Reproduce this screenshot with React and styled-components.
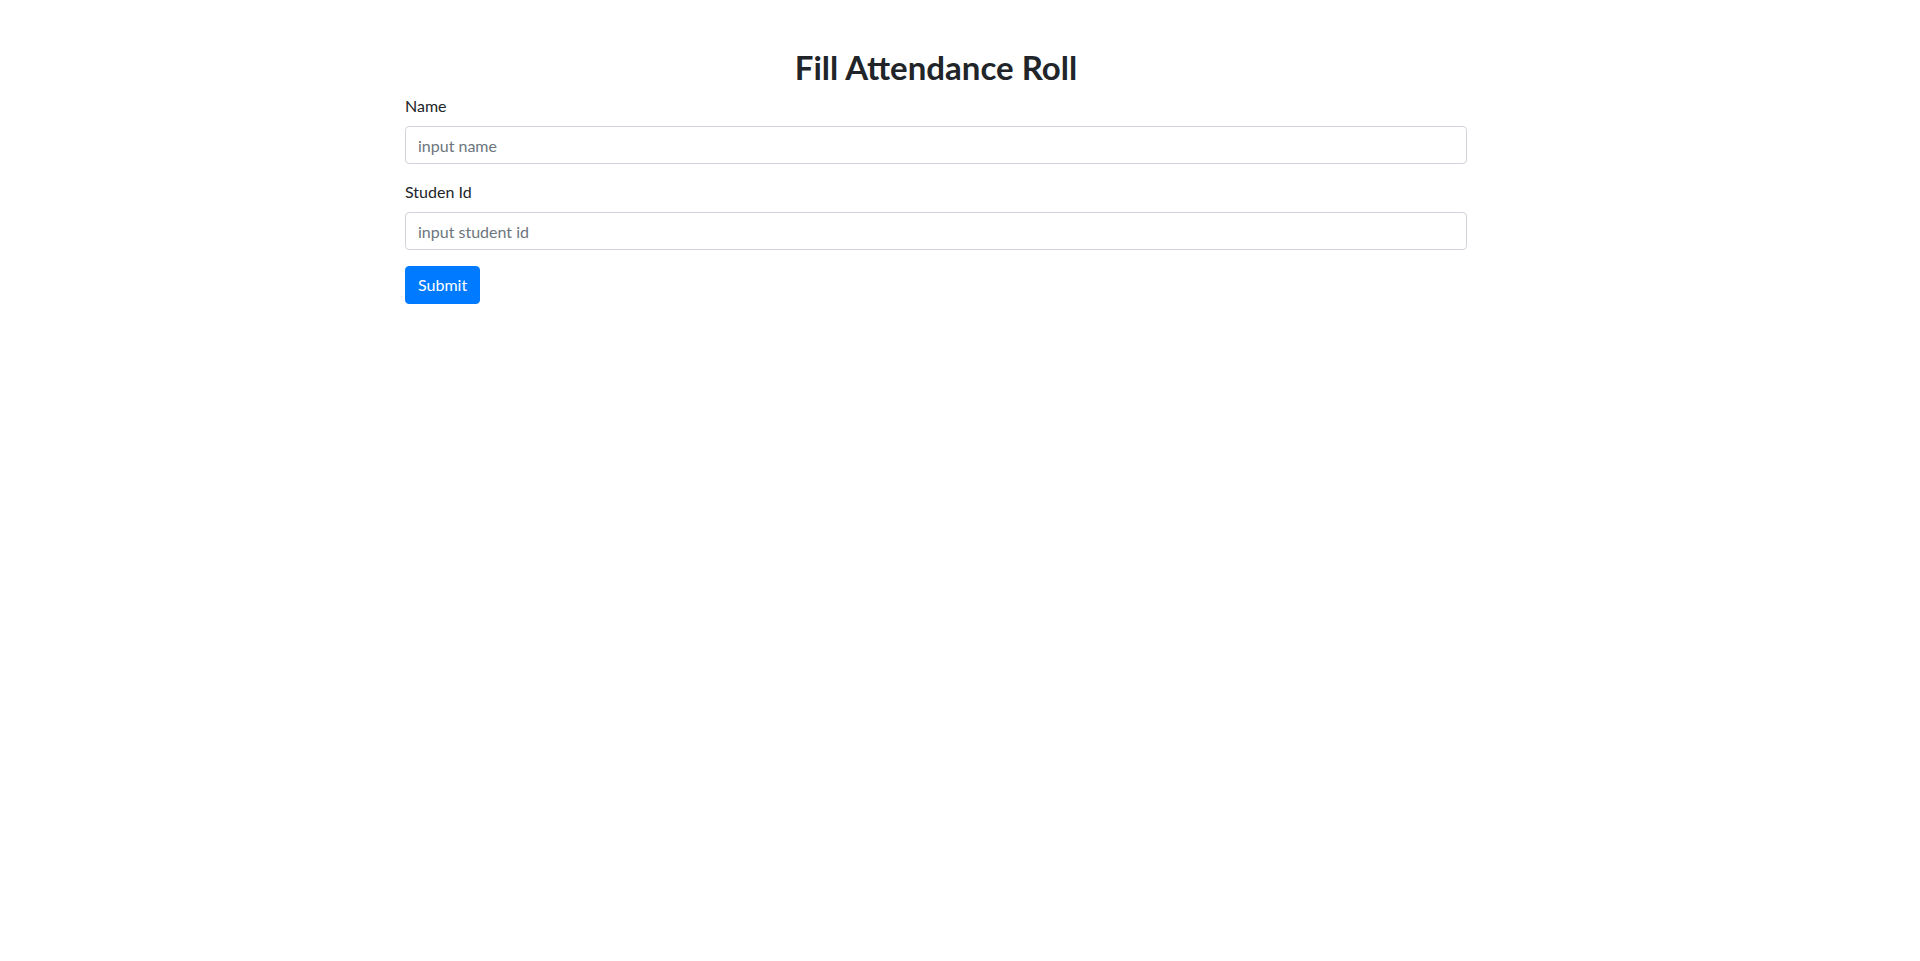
import React from 'react'
import styled, { createGlobalStyle } from 'styled-components'

const GlobalStyle = createGlobalStyle`
    *, *::before, *::after {
        box-sizing: border-box;
    }
    body {
        margin: 0;
        background: #fff;
        color: #212529;
        font-family: Lato, "Noto Sans", sans-serif;
        font-size: 16px;
        line-height: 1.5;
    }
`;

const Container = styled.div`
    width: 1062px;
    margin-left: 405px;
    padding-top: 48px;
`;

const Title = styled.h2`
    margin: 0 0 6.8px;
    text-align: center;
    font-size: 33px;
    font-weight: 700;
    line-height: 1.2;
`;

const Form = styled.form`
    display: flex;
    flex-direction: column;
    align-items: flex-start;
`;

const FormGroup = styled.div`
    display: flex;
    flex-direction: column;
    width: 100%;
    margin-bottom: 16px;
`;

const Label = styled.label`
    margin-bottom: 8px;
    font-size: 16px;
    line-height: 24px;
`;

const Input = styled.input`
    width: 100%;
    height: 38px;
    padding: 6px 12px;
    font-family: inherit;
    font-size: 16px;
    line-height: 24px;
    color: #495057;
    background: #fff;
    border: 1px solid #ced4da;
    border-radius: 4px;
    outline: none;
    &::placeholder {
        color: #6c757d;
    }
`;

const SubmitButton = styled.button`
    height: 38px;
    padding: 6px 12px;
    font-family: inherit;
    font-size: 16px;
    line-height: 24px;
    color: #fff;
    background: #007bff;
    border: 1px solid #007bff;
    border-radius: 4px;
    cursor: pointer;
`;

const fields = [
    { id: 'name', label: 'Name', placeholder: 'input name' },
    { id: 'studentId', label: 'Studen Id', placeholder: 'input student id' },
]

const App = () => {
    return (
        <>
        <GlobalStyle />
        <Container>
            <Title>Fill Attendance Roll</Title>
            <Form onSubmit={(e) => e.preventDefault()}>
                {
                    fields.map((field) => {
                        return (
                            <FormGroup key={field.id}>
                                <Label htmlFor={field.id}>{field.label}</Label>
                                <Input id={field.id} type="text" placeholder={field.placeholder} />
                            </FormGroup>
                        )
                    })
                }
                <SubmitButton type="submit">Submit</SubmitButton>
            </Form>
        </Container>
        </>
    )
}

export default App
